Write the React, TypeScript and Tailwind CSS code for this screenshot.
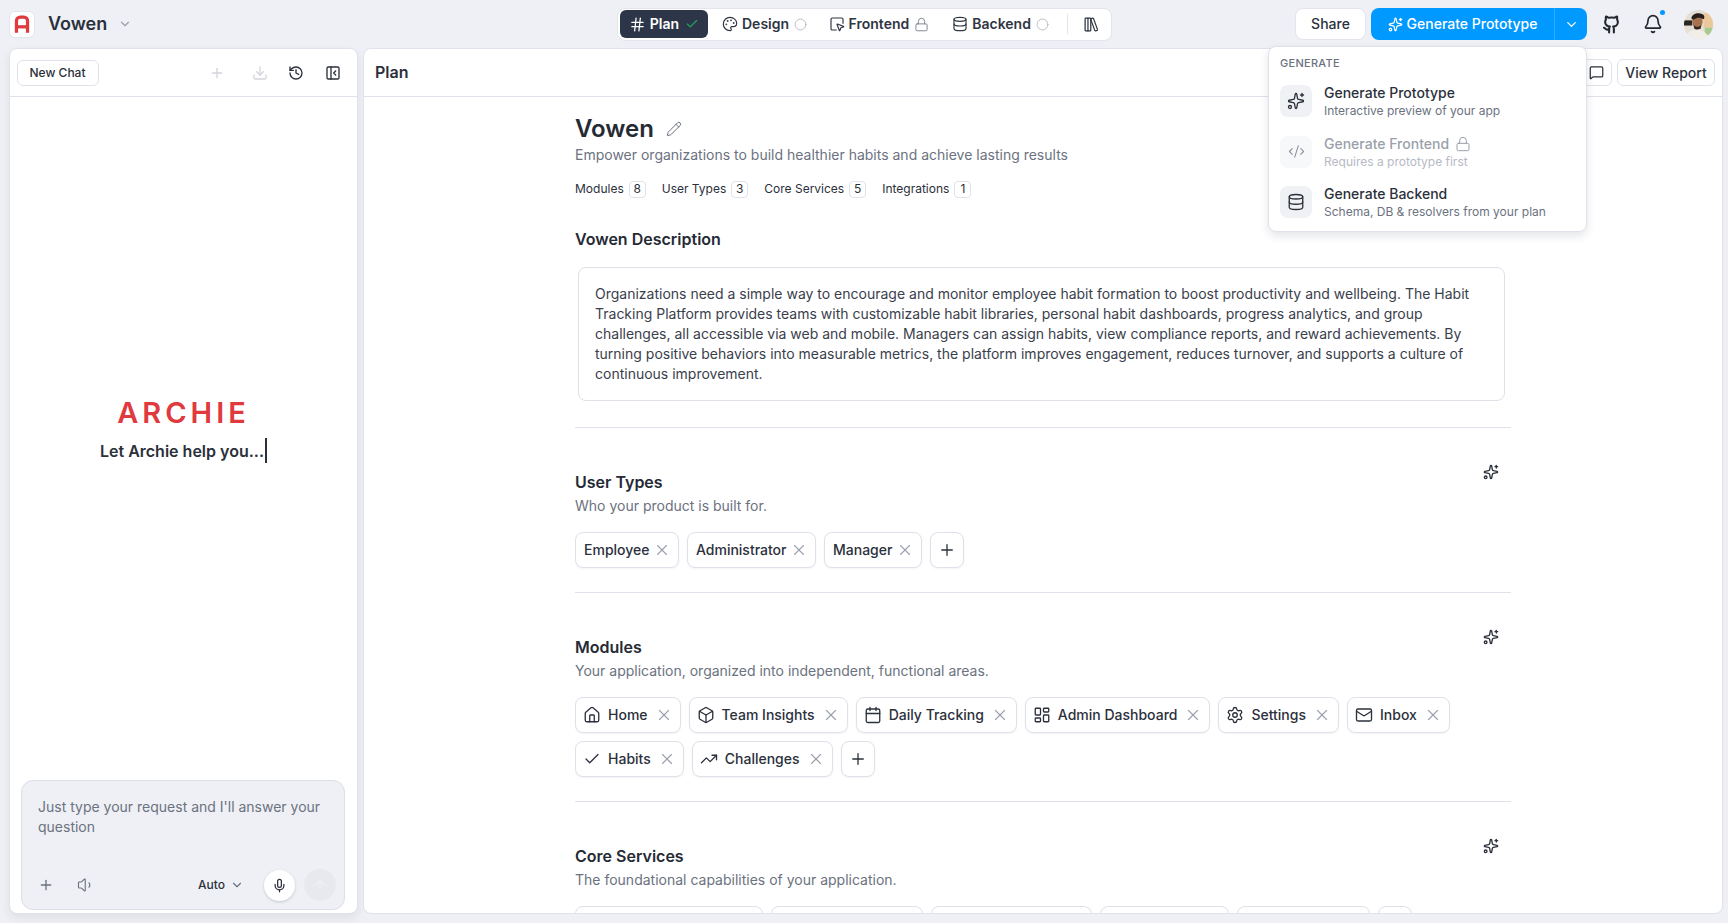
import {
  ArrowUp,
  Box,
  Calendar,
  Check,
  ChevronDown,
  Circle,
  CodeXml,
  Database,
  Download,
  Hash,
  History,
  House,
  LayoutDashboard,
  LibraryBig,
  Lock,
  Mail,
  MessageSquare,
  Mic,
  Palette,
  PanelLeftClose,
  Pencil,
  Plus,
  Settings,
  Sparkles,
  SquareMousePointer,
  TrendingUp,
  Volume1,
  X,
} from 'lucide-react';
import type { ReactNode } from 'react';

const stats = [
  { label: 'Modules', count: 8 },
  { label: 'User Types', count: 3 },
  { label: 'Core Services', count: 5 },
  { label: 'Integrations', count: 1 },
];

const modules = [
  { name: 'Home', icon: <House size={18} strokeWidth={1.75} /> },
  { name: 'Team Insights', icon: <Box size={18} strokeWidth={1.75} /> },
  { name: 'Daily Tracking', icon: <Calendar size={18} strokeWidth={1.75} /> },
  { name: 'Admin Dashboard', icon: <LayoutDashboard size={18} strokeWidth={1.75} /> },
  { name: 'Settings', icon: <Settings size={18} strokeWidth={1.75} /> },
  { name: 'Inbox', icon: <Mail size={18} strokeWidth={1.75} /> },
  { name: 'Habits', icon: <Check size={18} strokeWidth={1.75} /> },
  { name: 'Challenges', icon: <TrendingUp size={18} strokeWidth={1.75} /> },
];

const ArchieMark = () => (
  <svg width="26" height="27" viewBox="0 0 26 27" fill="none" stroke="#e0393e" strokeWidth="3.5">
    <path d="M7 22.5V9.5a4 4 0 0 1 4-4h4a4 4 0 0 1 4 4v13" />
    <path d="M7 16h12" />
  </svg>
);

const GithubIcon = () => (
  <svg width="19" height="19" viewBox="0 0 24 24" fill="none" stroke="currentColor" strokeWidth="2.6" strokeLinecap="round" strokeLinejoin="round">
    <path d="M15 22v-4a4.8 4.8 0 0 0-1-3.5c3 0 6-2 6-5.5.08-1.25-.27-2.48-1-3.5.28-1.15.28-2.35 0-3.5 0 0-1 0-3 1.5-2.64-.5-5.36-.5-8 0C6 2 5 2 5 2c-.3 1.15-.3 2.35 0 3.5A5.403 5.403 0 0 0 4 9c0 3.5 3 5.5 6 5.5-.39.49-.68 1.05-.85 1.65-.17.6-.22 1.23-.15 1.85v4" />
    <path d="M9 18c-4.51 2-5-2-6.5-2" />
  </svg>
);

const BellIcon = () => (
  <svg width="20" height="20" viewBox="0 0 24 24" fill="none" stroke="currentColor" strokeWidth="2" strokeLinecap="round" strokeLinejoin="round">
    <path d="M10.268 21a2 2 0 0 0 3.464 0" />
    <path d="M3.262 15.326A1 1 0 0 0 4 17h16a1 1 0 0 0 .74-1.673C19.41 13.956 18 12.499 18 8A6 6 0 0 0 6 8c0 4.499-1.411 5.956-2.738 7.326" />
  </svg>
);

// blurry photo in the original, just blocked in
const Avatar = () => (
  <svg width="29" height="29" viewBox="0 0 28 28" className="rounded-full">
    <rect width="28" height="28" fill="#e4ded4" />
    <rect x="19" y="3" width="9" height="14" fill="#ecc79a" />
    <rect x="20" y="17" width="8" height="7" fill="#a9c98e" />
    <rect x="0" y="10" width="8" height="5" fill="#2a2623" />
    <path d="M2 28c0-7 5-9 10-9s11 2 11 9z" fill="#f1eee8" />
    <ellipse cx="13" cy="11" rx="5" ry="6" fill="#a8724f" />
    <path d="M7 8c1-5 7-6 11-4 2 1 2 4 1 5-3-2-7-2-9 0-1 1-2 0-3-1z" fill="#26201c" />
    <path d="M9 14c2 3 6 3 8 0l-1 4c-2 1-5 1-6 0z" fill="#33251d" />
  </svg>
);

const Chip = ({ children, className = '' }: { children: ReactNode; className?: string }) => (
  <div className={`flex h-9 shrink-0 items-center rounded-lg border border-[#dfe1ea] bg-white text-sm font-medium text-[#2b303b] shadow-[0_1px_2px_rgba(30,40,70,0.05)] ${className}`}>
    {children}
  </div>
);

const RemoveIcon = () => <X size={18} strokeWidth={1.5} className="shrink-0 text-[#9a9fad]" />;

const AddChip = () => (
  <Chip className="w-[34px] justify-center">
    <Plus size={18} strokeWidth={1.75} />
  </Chip>
);

const SectionHead = ({ title, sub }: { title: string; sub: string }) => (
  <div className="relative">
    <h3 className="text-base leading-6 font-semibold text-[#252a35]">{title}</h3>
    <p className="mt-0.5 text-sm leading-5 text-[#6b7280]">{sub}</p>
    <Sparkles size={16} className="absolute top-[-6px] right-[12px] text-[#2b303b]" />
  </div>
);

const StepTab = ({ icon, label, status }: { icon: ReactNode; label: string; status: ReactNode }) => (
  <div className="flex items-center gap-1 text-sm font-semibold text-[#2f3542]">
    {icon}
    <span>{label}</span>
    <span className="ml-px flex">{status}</span>
  </div>
);

const MenuItem = ({ icon, title, sub, disabled = false }: { icon: ReactNode; title: ReactNode; sub: string; disabled?: boolean }) => (
  <div className="flex h-[50.5px] items-center gap-3">
    <div className={`flex size-8 items-center justify-center rounded-lg ${disabled ? 'bg-[#f7f8fa] text-[#8b909c]' : 'bg-[#f0f1f5] text-[#2b303b]'}`}>
      {icon}
    </div>
    <div>
      <div className={`flex items-center gap-1.5 text-sm leading-5 font-medium ${disabled ? 'text-[#9a9fab]' : 'text-[#2b303b]'}`}>{title}</div>
      <div className={`text-xs leading-4 ${disabled ? 'text-[#b6bac4]' : 'text-[#6b7280]'}`}>{sub}</div>
    </div>
  </div>
);

export default function App() {
  return (
    <div className="relative flex h-screen w-full flex-col overflow-hidden bg-[#eff0f5] [font-family:Inter,sans-serif]">
      {/* top bar */}
      <header className="grid h-12 shrink-0 grid-cols-[1fr_auto_1fr] items-center pr-2 pl-[9px]">
        <div className="flex items-center">
          <div className="flex h-[27px] w-[26px] items-center justify-center rounded-md border border-[#e3e5ec] bg-white">
            <ArchieMark />
          </div>
          <span className="ml-[13px] text-lg font-semibold text-[#2a303c]">Vowen</span>
          <ChevronDown size={14} className="ml-[11px] text-[#9a9fad]" />
        </div>

        <nav className="flex h-[33px] w-[495px] items-center rounded-lg border border-[#e3e5ec] bg-white pl-[2px]">
          <div className="mr-[14px] flex h-7 w-[88px] items-center justify-center gap-1 rounded-md bg-[#2d3648] text-sm font-semibold text-white">
            <Hash size={17} strokeWidth={1.75} />
            <span>Plan</span>
            <Check size={14} className="ml-0.5 text-[#22a55b]" />
          </div>
          <StepTab icon={<Palette size={16} strokeWidth={1.75} />} label="Design" status={<Circle size={13} strokeWidth={1.5} className="text-[#aeb2bc]" />} />
          <div className="w-[21.5px]" />
          <StepTab icon={<SquareMousePointer size={16} strokeWidth={1.75} />} label="Frontend" status={<Lock size={15} strokeWidth={1.5} className="text-[#7d828f]" />} />
          <div className="w-[23px]" />
          <StepTab icon={<Database size={16} strokeWidth={1.75} />} label="Backend" status={<Circle size={13} strokeWidth={1.5} className="text-[#aeb2bc]" />} />
          <div className="mr-[15px] ml-[18px] h-[20px] w-px bg-[#e3e5ec]" />
          <LibraryBig size={17} strokeWidth={1.75} className="text-[#2f3542]" />
        </nav>

        <div className="flex items-center justify-end">
          <button className="flex h-8 w-[71px] items-center justify-center rounded-lg border border-[#e3e5ec] bg-white text-sm font-medium text-[#2b303b]">
            Share
          </button>
          <div className="ml-[5px] flex h-8 w-[216px] items-center rounded-lg bg-[#0099ff] text-sm font-medium text-white">
            <div className="flex flex-1 items-center justify-center gap-1">
              <Sparkles size={15} />
              <span>Generate Prototype</span>
            </div>
            <div className="flex h-full w-[33px] items-center justify-center border-l border-[#33adff]">
              <ChevronDown size={15} />
            </div>
          </div>
          <div className="ml-[15px] text-[#22262e]">
            <GithubIcon />
          </div>
          <div className="relative ml-[22px] text-[#22262e]">
            <BellIcon />
            <span className="absolute -top-1 -right-0.5 size-[5px] rounded-full bg-[#0099ff]" />
          </div>
          <div className="mr-[7px] ml-[21px] flex">
            <Avatar />
          </div>
        </div>
      </header>

      {/* panels */}
      <div className="flex min-h-0 flex-1 gap-[5px] pr-[5px] pb-[9px] pl-[9px]">
        <aside className="flex w-[349px] shrink-0 flex-col rounded-lg border border-[#e0e2eb] bg-white shadow-[0_4px_10px_rgba(30,40,70,0.08)]">
          <div className="flex h-12 shrink-0 items-center border-b border-[#e0e2eb] pl-[6.5px]">
            <button className="flex h-[26px] w-[82px] items-center justify-center rounded-md border border-[#e0e2eb] text-xs font-medium text-[#2b303b]">
              New Chat
            </button>
            <Plus size={16} className="ml-[110.5px] text-[#d3d5dc]" />
            <Download size={16} className="ml-[27px] text-[#d3d5dc]" />
            <History size={16} className="ml-5 text-[#2b303b]" />
            <PanelLeftClose size={16} className="ml-[21px] text-[#2b303b]" />
          </div>

          <div className="flex flex-1 flex-col items-center justify-center pb-[17px]">
            <div className="text-[29px] leading-8 font-semibold tracking-[4px] text-[#e0393e]">ARCHIE</div>
            <div className="mt-[9px] flex items-center text-base font-semibold text-[#2b303b]">
              <span>Let Archie help you...</span>
              <span className="ml-px h-[25px] w-0.5 bg-[#2b303b]" />
            </div>
          </div>

          <div className="mr-3 mb-[3px] ml-[11px] flex h-[130px] shrink-0 flex-col rounded-xl border border-[#dcdee8] bg-[#eff0f5] pt-[16px] pr-[5px] pb-[8px] pl-4">
            <p className="pr-[8px] text-sm leading-5 text-[#6b7280]">Just type your request and I'll answer your question</p>
            <div className="mt-auto flex items-center">
              <Plus size={16} className="text-[#6b7280]" />
              <Volume1 size={18} strokeWidth={1.5} className="ml-[22.5px] text-[#6b7280]" />
              <span className="ml-[103.5px] text-xs font-medium text-[#2b303b]">Auto</span>
              <ChevronDown size={14} className="ml-[5px] text-[#6b7280]" />
              <div className="ml-5 flex size-[31px] items-center justify-center rounded-full bg-white shadow-[0_1px_3px_rgba(30,40,70,0.2)]">
                <Mic size={15} className="text-[#2b303b]" />
              </div>
              <div className="ml-[9px] flex size-8 items-center justify-center rounded-full bg-[#e8e9ee]">
                <ArrowUp size={14} className="text-[#f1f2f5]" />
              </div>
            </div>
          </div>
        </aside>

        <main className="flex min-w-0 flex-1 flex-col overflow-hidden rounded-lg border border-[#e0e2eb] bg-white">
          <div className="flex h-12 shrink-0 items-center border-b border-[#e0e2eb] pr-[7px] pl-[11px]">
            <span className="mb-0.5 text-base font-semibold text-[#2b303b]">Plan</span>
            <button className="ml-auto flex h-[27px] w-8 items-center justify-center rounded-md border border-[#e0e2eb]">
              <MessageSquare size={15} className="text-[#2b303b]" />
            </button>
            <button className="ml-[5px] h-[27px] w-[98px] rounded-md border border-[#e0e2eb] text-sm font-medium text-[#2b303b]">View Report</button>
          </div>

          <div className="mx-auto w-[936px] overflow-hidden pt-[16px]">
            <div className="flex items-center gap-3">
              <h1 className="text-2xl leading-8 font-semibold text-[#252a35]">Vowen</h1>
              <Pencil size={16} strokeWidth={1.5} className="text-[#6b7280]" />
            </div>
            <p className="text-sm leading-5 text-[#6b7280]">Empower organizations to build healthier habits and achieve lasting results</p>

            <div className="mt-[14px] flex h-5 items-center gap-4">
              {stats.map((s) => (
                <div key={s.label} className="flex items-center gap-[5px] text-xs text-[#2b303b]">
                  <span>{s.label}</span>
                  <span className="flex size-[17px] items-center justify-center rounded-[4px] border border-[#e0e2eb]">{s.count}</span>
                </div>
              ))}
            </div>

            <h3 className="mt-7 text-base leading-6 font-semibold text-[#252a35]">Vowen Description</h3>
            <div className="mt-4 mr-[6px] ml-[3px] rounded-lg border border-[#dfe1e8] px-4 py-4 text-sm leading-5 text-[#3a404c]">
              Organizations need a simple way to encourage and monitor employee habit formation to boost productivity and wellbeing. The Habit Tracking Platform provides teams with customizable habit libraries, personal habit dashboards, progress analytics, and group challenges, all accessible via web and mobile. Managers can assign habits, view compliance reports, and reward achievements. By turning positive behaviors into measurable metrics, the platform improves engagement, reduces turnover, and supports a culture of continuous improvement.
            </div>
            <hr className="mt-[26px] border-[#e0e2eb]" />

            <div className="mt-[42px]">
              <SectionHead title="User Types" sub="Who your product is built for." />
              <div className="mt-4 flex gap-2">
                {['Employee', 'Administrator', 'Manager'].map((name) => (
                  <Chip key={name} className="gap-1 pr-[6.5px] pl-2">
                    {name}
                    <RemoveIcon />
                  </Chip>
                ))}
                <AddChip />
              </div>
            </div>
            <hr className="mt-6 border-[#e0e2eb]" />

            <div className="mt-[42px]">
              <SectionHead title="Modules" sub="Your application, organized into independent, functional areas." />
              <div className="mt-4 flex flex-wrap gap-2">
                {modules.map((m) => (
                  <Chip key={m.name} className="gap-[7px] px-[7px]">
                    {m.icon}
                    {m.name}
                    <RemoveIcon />
                  </Chip>
                ))}
                <AddChip />
              </div>
            </div>
            <hr className="mt-6 border-[#e0e2eb]" />

            <div className="mt-[42px]">
              <SectionHead title="Core Services" sub="The foundational capabilities of your application." />
              <div className="mt-4 flex gap-2">
                <Chip className="w-[188px]">{''}</Chip>
                <Chip className="w-[152px]">{''}</Chip>
                <Chip className="w-[161px]">{''}</Chip>
                <Chip className="w-[129px]">{''}</Chip>
                <Chip className="w-[133px]">{''}</Chip>
                <AddChip />
              </div>
            </div>
          </div>
        </main>
      </div>

      {/* generate dropdown */}
      <div className="absolute top-[46px] left-[1268px] h-[186px] w-[319px] rounded-lg border border-[#e0e2eb] bg-white pt-2 pr-3 pl-[11px] shadow-[0_4px_10px_rgba(30,40,70,0.12)]">
        <div className="mb-[5px] text-[11px] leading-4 font-medium tracking-wide text-[#6b7280]">GENERATE</div>
        <MenuItem icon={<Sparkles size={18} strokeWidth={1.75} />} title="Generate Prototype" sub="Interactive preview of your app" />
        <MenuItem
          disabled
          icon={<CodeXml size={17} strokeWidth={1.5} />}
          title={
            <>
              Generate Frontend <Lock size={16} strokeWidth={1.5} />
            </>
          }
          sub="Requires a prototype first"
        />
        <MenuItem icon={<Database size={18} strokeWidth={1.75} />} title="Generate Backend" sub="Schema, DB & resolvers from your plan" />
      </div>
    </div>
  );
}
